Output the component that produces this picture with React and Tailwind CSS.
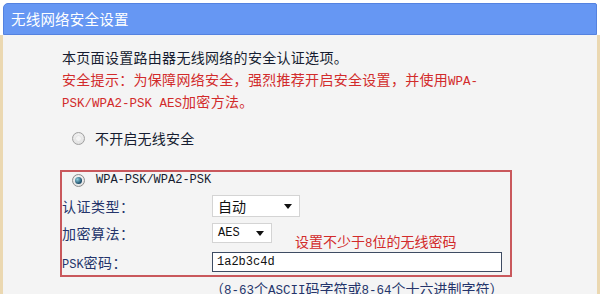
const cjk = "font-[family-name:Noto_Sans_CJK_SC,sans-serif]";
const mono = "font-[family-name:Liberation_Mono,monospace]";

function Radio({ checked }) {
  if (checked) {
    return (
      <span className="w-[13px] h-[13px] rounded-full border border-[#8c8c8c] bg-[radial-gradient(circle_at_50%_40%,#ffffff,#d8d8d8)] flex items-center justify-center shrink-0">
        <span className="w-[7px] h-[7px] rounded-full bg-[radial-gradient(circle_at_35%_35%,#8fd0e0,#1b4a66_70%)]" />
      </span>
    );
  }
  return (
    <span className="w-[13px] h-[13px] rounded-full border border-[#a0a0a0] bg-[radial-gradient(circle_at_50%_40%,#ffffff,#d4d4d4)] flex items-center justify-center shrink-0">
      <span className="w-[7px] h-[7px] rounded-full border border-[#e2e2e2] bg-[#f4f4f4]" />
    </span>
  );
}

function Arrow() {
  return (
    <svg width="8" height="5" viewBox="0 0 8 5" className="shrink-0">
      <path d="M0 0h8L4 5z" fill="#111" />
    </svg>
  );
}

export default function App() {
  return (
    <div className={`w-[600px] h-[294px] overflow-hidden bg-white pt-[3px] ${cjk}`}>
      <div className="mx-[3px] h-[32px] rounded-tl-[5px] rounded-tr-[2px] bg-[#6697f3] border border-[#5482e0] flex items-center pl-[7px]">
        <span className="text-white text-[14.5px] leading-none tracking-[0.2px]">无线网络安全设置</span>
      </div>
      <div className="border-x-[3px] border-[#ebd8b1] bg-[#f4f4f4] pl-[57px] pt-[11px] h-[300px]">
        <div className="pl-[2px] text-[14px] leading-[22px] tracking-[0.3px]">
          <div className="h-[22px] text-[#161c30]">本页面设置路由器无线网络的安全认证选项。</div>
          <div className="h-[22px] text-[#d22b2b] whitespace-nowrap">
            安全提示：为保障网络安全，强烈推荐开启安全设置，并使用
            <span className={`${mono} text-[12.5px] tracking-normal leading-none`}>WPA-</span>
          </div>
          <div className="h-[22px] text-[#d22b2b] whitespace-nowrap">
            <span className={`${mono} text-[12.5px] tracking-normal leading-none`}>PSK/WPA2-PSK AES</span>
            加密方法。
          </div>
        </div>

        <div className="pl-[2px] mt-[15px] h-[22px] flex items-center">
          <span className="ml-[10px]"><Radio /></span>
          <span className="ml-[10px] text-[14px] text-[#161c30] leading-[22px] tracking-[0.2px]">不开启无线安全</span>
        </div>

        <div className="mt-[21px] w-[452px] border-2 border-[#c9585c] pb-[3px]">
          <div className="h-[16px] flex items-center">
            <span className="ml-[10px]"><Radio checked /></span>
            <span className={`ml-[11px] ${mono} text-[12px] leading-none text-[#161c30]`}>WPA-PSK/WPA2-PSK</span>
          </div>

          <div className="mt-[7px] h-[22px] flex items-center">
            <span className="w-[150px] text-[14px] leading-[22px] text-[#24346b] tracking-[0.5px]">认证类型：</span>
            <div className="w-[88px] h-[22px] bg-white border border-[#d4d4d4] flex items-center justify-between pl-[5px] pr-[7px]">
              <span className="text-[14px] leading-none text-[#111]">自动</span>
              <Arrow />
            </div>
          </div>

          <div className="mt-[6px] h-[20px] flex items-start">
            <span className="w-[150px] h-[20px] flex items-center text-[14px] text-[#24346b] tracking-[0.5px]">加密算法：</span>
            <div className="w-[60px] h-[20px] bg-white border border-[#d4d4d4] flex items-center justify-between pl-[5px] pr-[7px]">
              <span className={`${mono} text-[12px] leading-none text-[#111]`}>AES</span>
              <Arrow />
            </div>
            <span className="ml-[23px] mt-[9px] h-[18px] text-[14px] leading-[18px] text-[#d22b2b] whitespace-nowrap">
              设置不少于<span className={`${mono} text-[12.5px] leading-none`}>8</span>位的无线密码
            </span>
          </div>

          <div className="mt-[9px] h-[20px] flex items-center">
            <span className="w-[150px] text-[14px] leading-[20px] text-[#24346b] tracking-[0.5px] whitespace-nowrap">
              <span className={`${mono} text-[12px] tracking-normal leading-none`}>PSK</span>密码：
            </span>
            <div className="w-[290px] h-[20px] bg-white border-[1.5px] border-[#3e4c63] flex items-center pl-[4px]">
              <span className={`${mono} text-[12px] leading-none text-[#111]`}>1a2b3c4d</span>
            </div>
          </div>
        </div>

        <div className="pl-[150px] h-[22px] text-[14px] leading-[22px] text-[#24346b] whitespace-nowrap">
          （<span className={`${mono} text-[12.5px] leading-none`}>8-63</span>个<span className={`${mono} text-[12.5px] leading-none`}>ASCII</span>码字符或<span className={`${mono} text-[12.5px] leading-none`}>8-64</span>个十六进制字符）
        </div>
      </div>
    </div>
  );
}
